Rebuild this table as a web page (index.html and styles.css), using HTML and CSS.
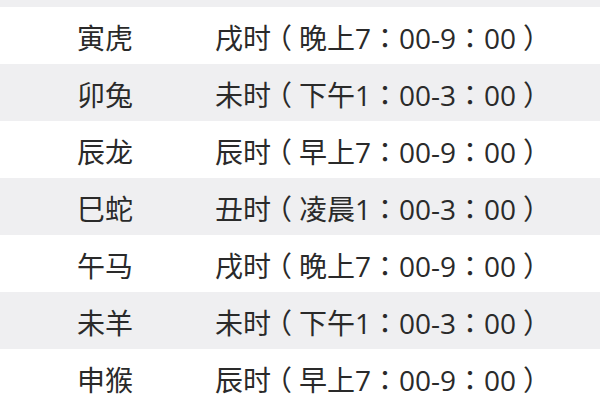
FILE: index.html
```html
<!DOCTYPE html>
<html lang="zh-CN">
<head>
<meta charset="utf-8">
<link rel="stylesheet" href="styles.css">
</head>
<body>
<div class="table">
  <div class="row gray"><span class="animal">丑牛</span><span class="time" lang="zh-TW">丑时<span class="p">（</span>凌晨1：00-3：00<span class="p">）</span></span></div>
  <div class="row"><span class="animal">寅虎</span><span class="time" lang="zh-TW">戌时<span class="p">（</span>晚上7：00-9：00<span class="p">）</span></span></div>
  <div class="row gray"><span class="animal">卯兔</span><span class="time" lang="zh-TW">未时<span class="p">（</span>下午1：00-3：00<span class="p">）</span></span></div>
  <div class="row"><span class="animal">辰龙</span><span class="time" lang="zh-TW">辰时<span class="p">（</span>早上7：00-9：00<span class="p">）</span></span></div>
  <div class="row gray"><span class="animal">巳蛇</span><span class="time" lang="zh-TW">丑时<span class="p">（</span>凌晨1：00-3：00<span class="p">）</span></span></div>
  <div class="row"><span class="animal">午马</span><span class="time" lang="zh-TW">戌时<span class="p">（</span>晚上7：00-9：00<span class="p">）</span></span></div>
  <div class="row gray"><span class="animal">未羊</span><span class="time" lang="zh-TW">未时<span class="p">（</span>下午1：00-3：00<span class="p">）</span></span></div>
  <div class="row"><span class="animal">申猴</span><span class="time" lang="zh-TW">辰时<span class="p">（</span>早上7：00-9：00<span class="p">）</span></span></div>
</div>
</body>
</html>
```
FILE: styles.css
```css
html, body {
  margin: 0;
  padding: 0;
  background: #ffffff;
  width: 600px;
  height: 400px;
  overflow: hidden;
}
.table {
  margin-top: -50px;
  font-family: "Noto Sans CJK SC", "Noto Sans", sans-serif;
  color: #2a2a2a;
  font-size: 28px;
}
.row {
  height: 57px;
  display: flex;
  align-items: center;
  padding-left: 77px;
  padding-top: 2px;
  box-sizing: border-box;
}
.row.gray {
  background: #efeff1;
}
.animal {
  width: 138px;
  white-space: nowrap;
}
.time {
  white-space: nowrap;
  font-family: "Open Sans", "Noto Sans CJK TC", "Noto Sans CJK SC", sans-serif;
}
.p {
  font-feature-settings: "halt" 1;
  padding: 0 0.25em;
}
```
